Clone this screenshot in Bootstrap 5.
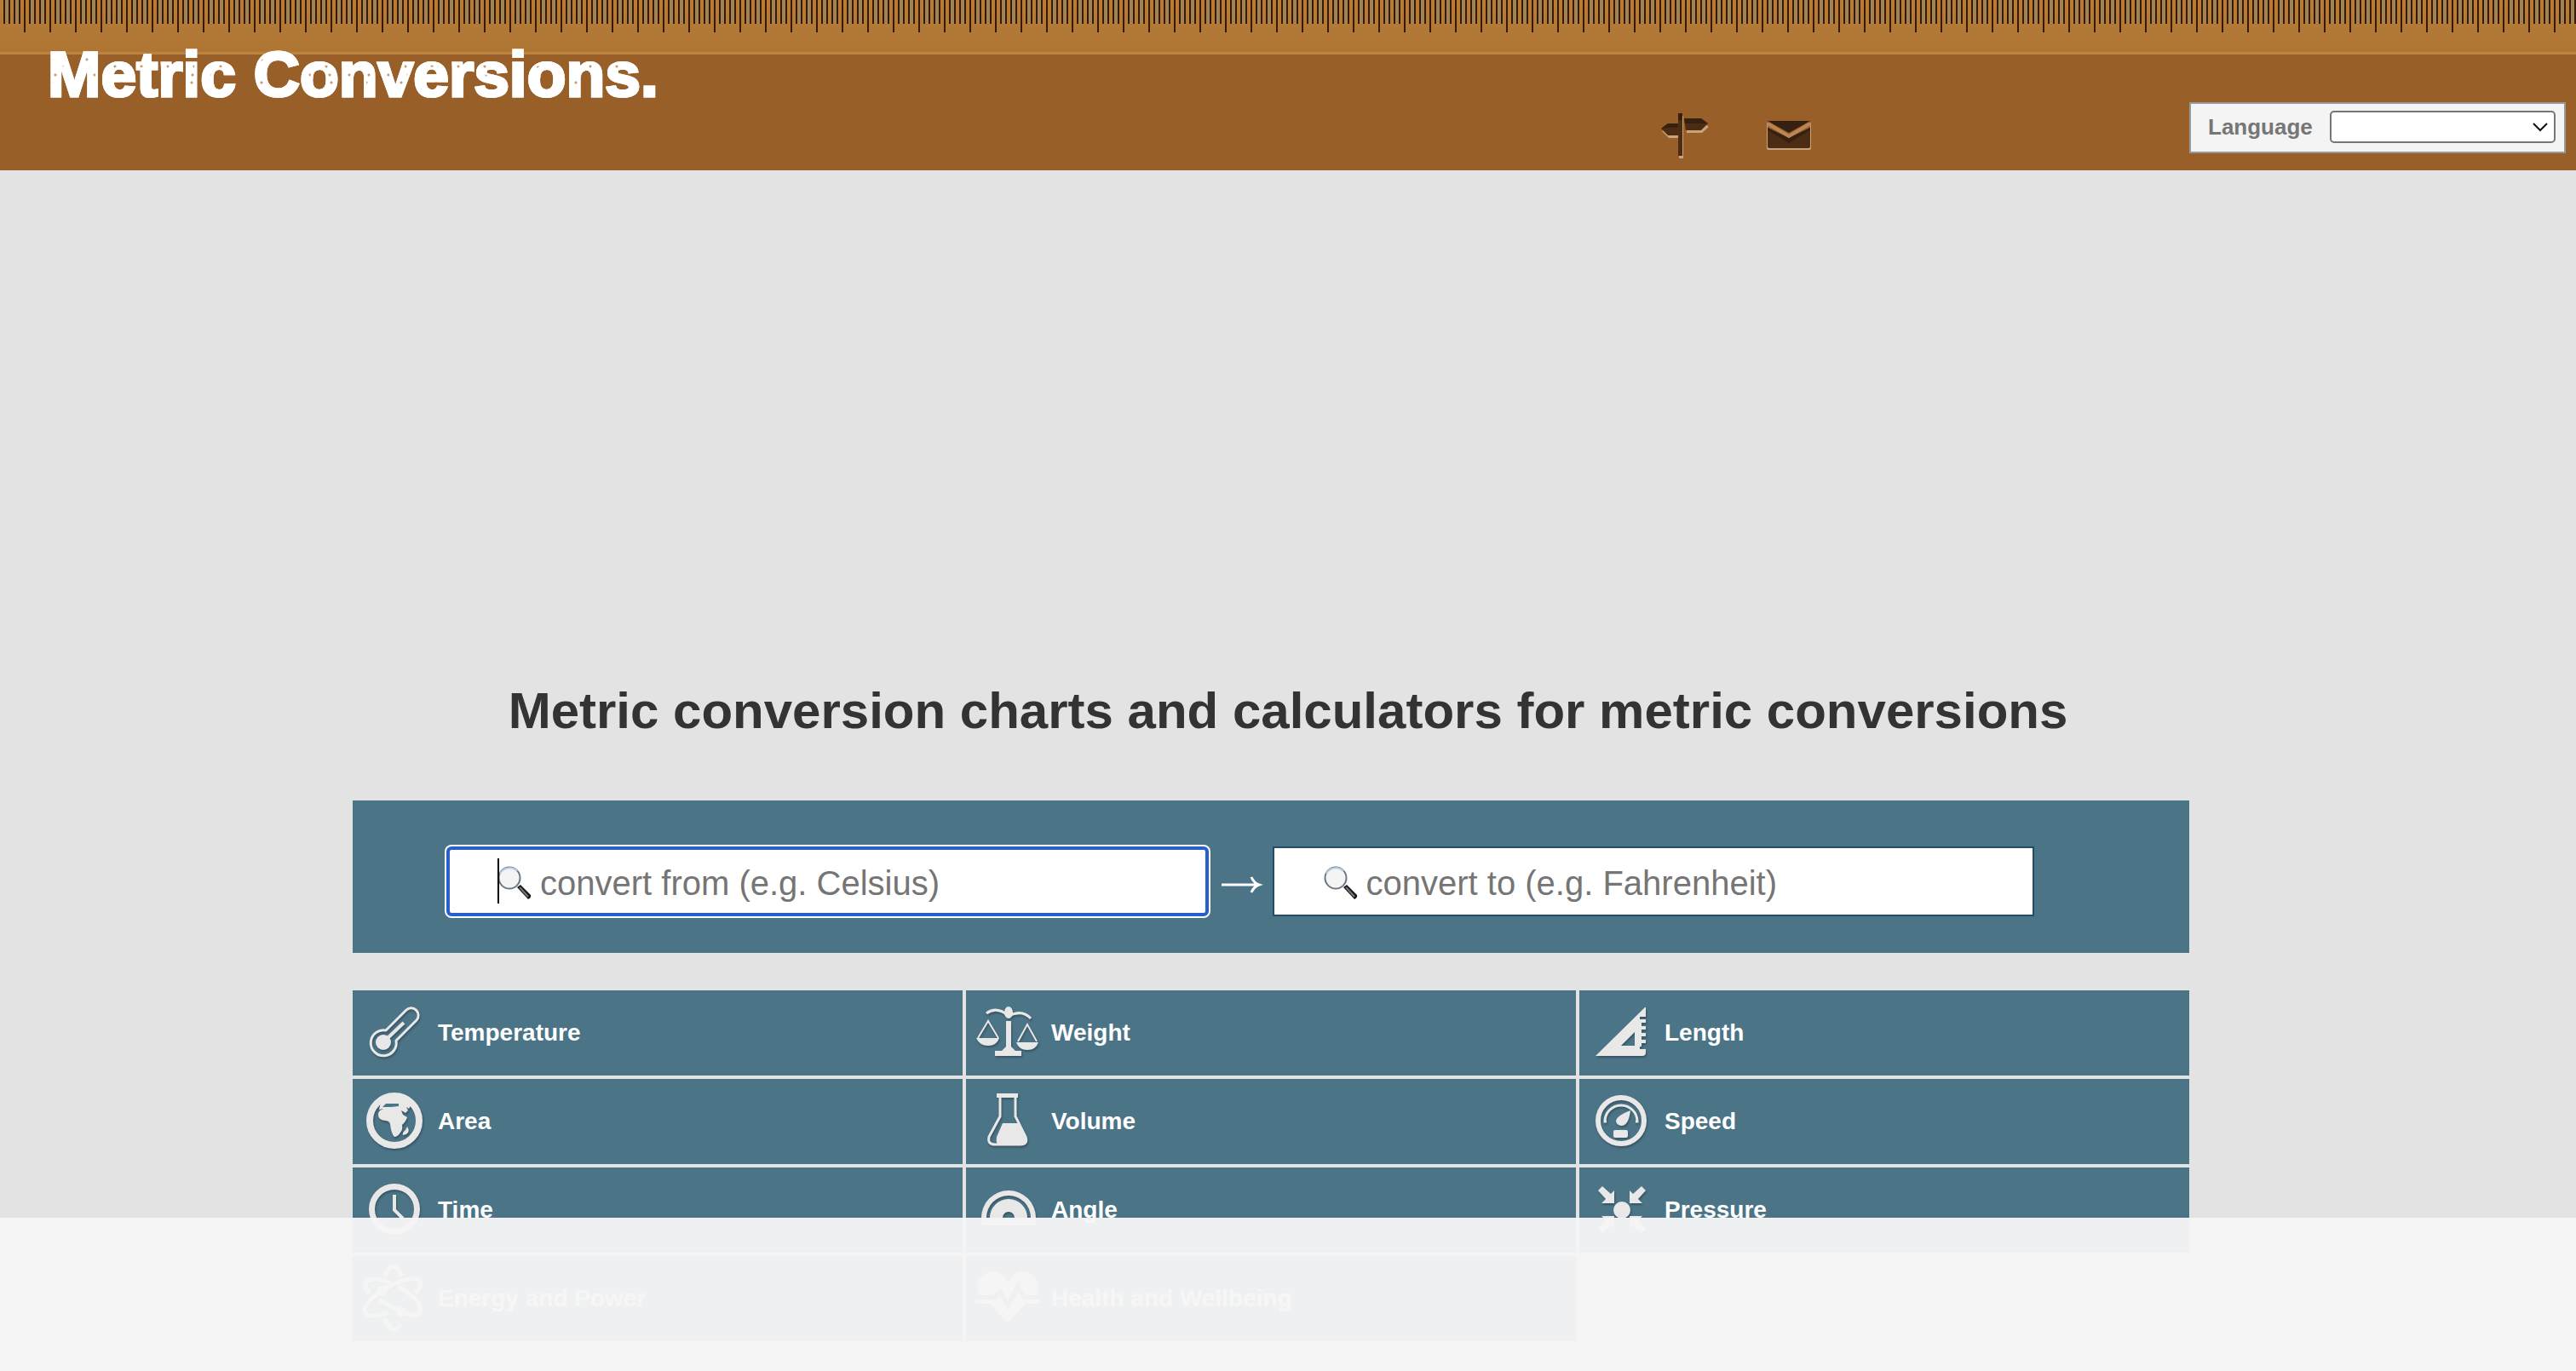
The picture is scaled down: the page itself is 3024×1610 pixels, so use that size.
<!DOCTYPE html>
<html lang="en">
<head>
<meta charset="utf-8">
<meta name="viewport" content="width=device-width, initial-scale=1">
<title>Metric Conversions</title>
<link href="https://cdn.jsdelivr.net/npm/bootstrap@5.3.0/dist/css/bootstrap.min.css" rel="stylesheet">
<style>
  body { background: #e3e3e3; font-family: "Liberation Sans", Arial, sans-serif; color: #333; }
  .site-head { min-height: 200px; background: #995f28; }
  .site-head {
    background-image:
      repeating-linear-gradient(90deg, transparent 0 28px, #3a1a06 28px 30px),
      repeating-linear-gradient(90deg, transparent 0 4px, #3a1a06 4px 6px, #a08355 6px 10px, #3a1a06 10px 12px, transparent 12px 16px, #3a1a06 16px 18px, #a08355 18px 22px, #3a1a06 22px 24px, transparent 24px 30px),
      linear-gradient(#b87c34 0, #b17836 40px, #b07532 60px, #bb8540 62px, #bb8540 64px);
    background-size: 100% 38px, 100% 28px, 100% 64px;
    background-repeat: no-repeat;
  }
  .brand-link {
    margin: 47px 0 0 56px; font-size: 75px; line-height: 80px; font-weight: 700; text-decoration: none; color: transparent;
    -webkit-text-stroke: 3px #fff;
    background-color: #fff;
    background-image:
      radial-gradient(circle at 9px 12px, #c49a70 0 1px, transparent 2px),
      radial-gradient(circle at 17px 31px, #c49a70 0 1px, transparent 2px),
      radial-gradient(circle at 5px 23px, #c49a70 0 1px, transparent 2px);
    background-size: 23px 29px, 31px 37px, 41px 27px;
    -webkit-background-clip: text; background-clip: text;
  }
  .head-links { width: 624px; margin-top: 128px; gap: 66px; }
  .lang-box { width: 442px; height: 60px; margin: 120px 12px 0 0; padding: 0 10px 2px 20px; background: #f4f4f4; border: 2px solid #999; }
  .lang-box label { font-size: 26px; line-height: 30px; font-weight: 700; color: #767676; }
  .lang-pick { width: 265px; height: 38px; appearance: none; background: #fff; border: 2px solid #767676; border-radius: 5px; }
  .pick-arrow { position: absolute; right: 8px; top: 13px; pointer-events: none; }
  .page-wrap { max-width: 2196px; }
  .banner-slot { height: 605px; }
  .page-title { font-size: 60px; line-height: 60px; font-weight: 700; margin: 0 0 75px; }
  .inner-col { padding-right: 40px; }
  .finder { background: #4b7487; padding: 54px 182px 43px 110px; margin-bottom: 44px; }
  .field-cell { flex: 1 1 0; min-width: 0; }
  .unit-input { width: 100%; height: 82px; padding: 4px 20px 0 108px; font-size: 40px; border: 2px solid #234c6a; background: #fff; color: #333; outline: 0; }
  .unit-input::placeholder { color: #757575; opacity: 1; }
  .unit-input.is-active { border: 4px solid #2860cb; border-radius: 6px; padding-left: 106px; box-shadow: 0 0 0 2px #fff; }
  .glass { position: absolute; left: 60px; top: 22px; pointer-events: none; }
  .caret-bar { position: absolute; left: 60px; top: 14px; width: 2px; height: 53px; background: #000; }
  .unit-grid { display: grid; grid-template-columns: repeat(3, 1fr); gap: 4px; padding-bottom: 60px; }
  .unit-tile { background: #4b7487; color: #fff; height: 100px; font-size: 28px; font-weight: 700; text-decoration: none; }
  .unit-tile svg { filter: drop-shadow(1px 2px 1px rgba(40,50,60,.5)); }
  .foot-veil { height: 180px; background: rgba(246,246,246,.96); }
</style>
<script src="https://cdn.jsdelivr.net/npm/bootstrap@5.3.0/dist/js/bootstrap.bundle.min.js"></script>
</head>
<body>
<header class="site-head d-flex align-items-start">
  <a class="brand-link" href="#">Metric Conversions.</a>
  <nav class="head-links ms-auto d-flex" aria-label="Site">
    <a href="#" aria-label="Site map">
      <svg width="60" height="62" viewBox="0 0 60 62" class="d-block">
        <g fill="#caa37c" transform="translate(1 3)"><path d="M24 5h5v50h-5zM4 23l8-6h14v14H12zM33 12h18l8 6-8 7H33z"/></g>
        <path fill="#4c2d14" d="M24 5h5v50h-5zM4 23l8-6h12v14H12zM31 11h20l8 6-8 8H33z"/>
        <path fill="#362010" d="M24 5h5v8h-5zM4 23l8-6h12v4zM31 11h20l8 6-27 0z"/>
      </svg>
    </a>
    <a href="#" aria-label="Contact">
      <svg width="56" height="62" viewBox="0 0 56 62" class="d-block">
        <path fill="#caa37c" d="M2 16l26 15 26-15v30a2 2 0 0 1-2 2H4a2 2 0 0 1-2-2z"/>
        <path fill="#995f28" d="M3 18l25 16 25-16v5L28 38 3 23z"/>
        <path fill="#4c2d14" d="M3 22l25 12 25-12v22a2 2 0 0 1-2 2H5a2 2 0 0 1-2-2z"/>
        <path fill="#362010" d="M3 22l25 12 25-12v3L28 40 3 25zM3 14h50L28 28z"/>
        <path fill="none" stroke="#b98657" stroke-width="4" d="M3 17l25 15 25-15"/>
      </svg>
    </a>
  </nav>
  <form class="lang-box d-flex align-items-center justify-content-between">
    <label for="lang">Language</label>
    <span class="position-relative d-block">
      <select id="lang" class="lang-pick d-block"><option></option></select>
      <svg class="pick-arrow" width="20" height="14" viewBox="0 0 20 14" fill="none" stroke="#111" stroke-width="2"><path d="M2 2l8 8 8-8"/></svg>
    </span>
  </form>
</header>

<main>
  <div class="banner-slot"></div>
  <h1 class="page-title text-center">Metric conversion charts and calculators for metric conversions</h1>
  <div class="page-wrap mx-auto">
    <div class="inner-col">
      <form class="finder d-flex align-items-center">
        <div class="position-relative field-cell">
          <input class="unit-input is-active d-block" type="text" aria-label="Convert from" placeholder="convert from (e.g. Celsius)">
          <svg class="glass" width="42" height="42" viewBox="0 0 42 42">
            <path d="M23 26l4-3 12 12q1 3-3 5z" fill="#16181b"/><path d="M26 26l10 11" stroke="#777" stroke-width="2"/>
            <circle cx="14" cy="15" r="12.500" fill="#f4f4f4" stroke="#6e7882" stroke-width="2"/><path d="M3 10a12.500 12.500 0 0 1 20-3" fill="none" stroke="#b9cfe6" stroke-width="2"/>
          </svg>
          <span class="caret-bar"></span>
        </div>
        <svg class="flex-shrink-0" width="75" height="82" viewBox="0 0 75 82" fill="none" stroke="#fff" stroke-width="3"><path d="M15 45h44M50 36q3 7 9 9-6 2-9 9"/></svg>
        <div class="position-relative field-cell">
          <input class="unit-input d-block" type="text" aria-label="Convert to" placeholder="convert to (e.g. Fahrenheit)">
          <svg class="glass" width="42" height="42" viewBox="0 0 42 42">
            <path d="M23 26l4-3 12 12q1 3-3 5z" fill="#16181b"/><path d="M26 26l10 11" stroke="#777" stroke-width="2"/>
            <circle cx="14" cy="15" r="12.500" fill="#f4f4f4" stroke="#6e7882" stroke-width="2"/><path d="M3 10a12.500 12.500 0 0 1 20-3" fill="none" stroke="#b9cfe6" stroke-width="2"/>
          </svg>
        </div>
      </form>

      <div class="unit-grid">
        <a class="unit-tile d-flex align-items-center" href="#">
          <svg width="100" height="100" viewBox="0 0 100 100" fill="none" stroke="#e8e8e8" stroke-width="3">
            <path d="M39 47L63 23A8.500 8.500 0 0 1 75 35L51 59A15 15 0 1 1 39 47z" stroke-linejoin="round"/>
            <circle cx="36" cy="61" r="9" fill="#e8e8e8" stroke="none"/><path d="M38 59L60 38" stroke-width="4"/>
          </svg>Temperature</a>
        <a class="unit-tile d-flex align-items-center" href="#">
          <svg width="100" height="100" viewBox="0 0 100 100" fill="#e8e8e8">
            <path d="M34 77v-6h8l5-5V36h6v30l5 5h7v6z"/><ellipse cx="50" cy="26" rx="5" ry="7"/>
            <path d="M24 27Q36 18 50 30Q66 22 76 33" fill="none" stroke="#e8e8e8" stroke-width="3"/>
            <path d="M14 56L26 36l12 20M61 60l11-20 11 20" fill="none" stroke="#e8e8e8" stroke-width="2"/>
            <path d="M12 56h27q-3 9-13 9t-14-9zM59 61h26q-3 9-13 9t-13-9z"/>
          </svg>Weight</a>
        <a class="unit-tile d-flex align-items-center" href="#">
          <svg width="100" height="100" viewBox="0 0 100 100" fill="#e8e8e8">
            <path fill-rule="evenodd" d="M19 77L77 20h1V31H71V34H78V38H73V42H78V46H73V50H78V54H73V58H78V62H73V66H71V69H78V73Q78 77 74 77zM49 65h16V49z"/>
          </svg>Length</a>

        <a class="unit-tile d-flex align-items-center" href="#">
          <svg width="100" height="100" viewBox="0 0 100 100" fill="#e8e8e8">
            <circle cx="49" cy="49" r="29" fill="none" stroke="#e8e8e8" stroke-width="8"/>
            <path d="M31 36Q32 26 41 20H60Q68 25 69 30L66 35 63 33 65 37 62 40 57 37 59 42 64 45Q62 51 58 54 59 60 56 63 53 68 49 68 45 64 44 53 43 49 38 49 30 48 30 42 30 37 36 35z"/>
            <path d="M35 33l4-4h15v3l-9 1z" fill="#4b7487"/><path d="M59 66q-1-3 3-6l2-4q4 6-1 9z"/>
          </svg>Area</a>
        <a class="unit-tile d-flex align-items-center" href="#">
          <svg width="100" height="100" viewBox="0 0 100 100" fill="#e8e8e8">
            <path d="M36 17h25v5H36z"/>
            <path d="M40 20v24L27 68q-2 9 7 9h30q9 0 6-9L58 44V20" fill="none" stroke="#e8e8e8" stroke-width="3"/>
            <path d="M43 52h19l9 18q1 7-6 7H37q-2-3-1-9z"/>
          </svg>Volume</a>
        <a class="unit-tile d-flex align-items-center" href="#">
          <svg width="100" height="100" viewBox="0 0 100 100" fill="#e8e8e8">
            <circle cx="49" cy="49" r="27" fill="none" stroke="#e8e8e8" stroke-width="6"/>
            <path d="M32 50h-2a19 19 0 1 1 38 0h-2" fill="none" stroke="#e8e8e8" stroke-width="3"/>
            <path d="M60 37q-2 18-11 18-6-1-6-6 1-6 17-12z"/><rect x="40" y="60" width="17" height="9" rx="2"/>
          </svg>Speed</a>

        <a class="unit-tile d-flex align-items-center" href="#">
          <svg width="100" height="100" viewBox="0 0 100 100" fill="none" stroke="#e8e8e8">
            <circle cx="49" cy="49" r="26.500" stroke-width="7"/><path d="M49 32v18l10 10" stroke-width="4"/>
          </svg>Time</a>
        <a class="unit-tile d-flex align-items-center" href="#">
          <svg width="100" height="100" viewBox="0 0 100 100" fill="#e8e8e8">
            <path fill-rule="evenodd" d="M18 68V59a32 32 0 0 1 64 0v9zM24 59h4a22 22 0 0 1 44 0h4a26 26 0 0 0-52 0zM43 59h14a7 7 0 0 0-14 0z"/>
          </svg>Angle</a>
        <a class="unit-tile d-flex align-items-center" href="#">
          <svg width="100" height="100" viewBox="0 0 100 100" fill="#e8e8e8">
            <circle cx="50" cy="50" r="10"/>
            <path id="press" d="M22 27l5-5 10 9 4-4v15H26l5-5z"/>
            <use href="#press" transform="matrix(-1 0 0 1 100 0)"/><use href="#press" transform="matrix(1 0 0 -1 0 99)"/><use href="#press" transform="matrix(-1 0 0 -1 100 99)"/>
          </svg>Pressure</a>

        <a class="unit-tile d-flex align-items-center" href="#">
          <svg width="100" height="100" viewBox="0 0 100 100" fill="none" stroke="#e8e8e8" stroke-width="5">
            <path d="M38 24q9-24 20 0M38 74q10 22 18 6M20 44C8 30 18 22 44 31M74 44C90 26 72 22 48 33 18 48 8 64 18 69q8 4 24-3M53 36Q84 54 79 66T31 51"/>
            <circle cx="35" cy="41" r="6" fill="#e8e8e8" stroke="none"/><circle cx="57" cy="66" r="6" fill="#e8e8e8" stroke="none"/>
          </svg>Energy and Power</a>
        <a class="unit-tile d-flex align-items-center" href="#">
          <svg width="100" height="100" viewBox="0 0 100 100" fill="#e8e8e8">
            <path d="M15 46Q10 30 22 21 38 12 49 31 60 12 76 21 88 30 83 46H69L61 29 49 53 41 38 32 46z"/>
            <path d="M11 51h23l6-5 9 18 12-22 7 9h18v5H70L49 78 28 56H11z"/>
          </svg>Health and Wellbeing</a>
      </div>
    </div>
  </div>
</main>
<aside class="foot-veil fixed-bottom" aria-label="Notice"></aside>
</body>
</html>
